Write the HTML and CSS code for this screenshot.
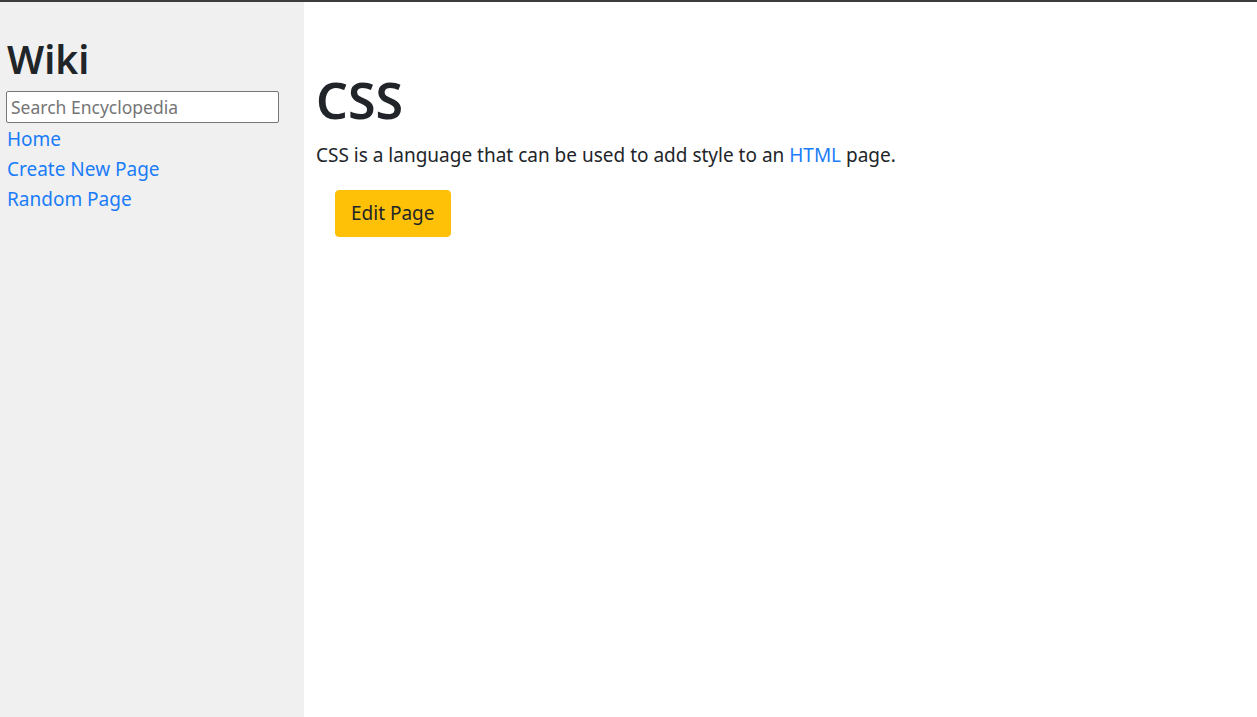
FILE: index.html
```html
<!DOCTYPE html>
<html lang="en">
<head>
<meta charset="utf-8">
<title>CSS</title>
<link rel="stylesheet" href="styles.css">
</head>
<body>
<div class="layout">
  <aside class="sidebar">
    <h2 class="brand">Wiki</h2>
    <form class="search-form">
      <input class="search" type="text" name="q" placeholder="Search Encyclopedia">
    </form>
    <div class="nav-item"><a href="#">Home</a></div>
    <div class="nav-item"><a href="#">Create New Page</a></div>
    <div class="nav-item"><a href="#">Random Page</a></div>
  </aside>
  <main class="main">
    <h1 class="title">CSS</h1>
    <p class="text">CSS is a language that can be used to add style to an <a href="#">HTML</a> page.</p>
    <div class="actions">
      <button class="btn-edit" type="button">Edit Page</button>
    </div>
  </main>
</div>
</body>
</html>
```

FILE: styles.css
```css
* { box-sizing: border-box; }
html, body { margin: 0; padding: 0; }
body {
  font-family: "Noto Sans", "Open Sans", sans-serif;
  font-size: 19px;
  line-height: 30px;
  color: #212529;
  background: #fff;
  border-top: 2px solid #3c3c3c;
}
a { color: #1a7cf8; text-decoration: none; }
.layout {
  display: flex;
  min-height: calc(100vh - 2px);
}
.sidebar {
  width: 304px;
  flex: none;
  background: #f0f0f0;
  padding: 30px 6px 0 6px;
}
.brand {
  margin: 0 0 5px 1px;
  font-size: 39px;
  line-height: 54px;
  font-weight: 600;
}
.search-form { margin: 0; }
.search {
  display: block;
  width: 273px;
  height: 32px;
  border: 1px solid #767676;
  border-radius: 2px;
  padding: 0 4px;
  font-family: inherit;
  font-size: 17.5px;
  color: #212529;
  background: #fff;
}
.search::placeholder { color: #757575; }
.nav-item { padding-left: 1px; line-height: 30px; }
.nav-item:first-of-type { margin-top: 1px; }
.main {
  flex: 1;
  padding: 68px 12px 0 12px;
}
.title {
  margin: 0 0 10px 0;
  font-size: 50px;
  line-height: 60px;
  font-weight: 600;
}
.text { margin: 0 0 20px 0; }
.actions { padding-left: 19px; }
.btn-edit {
  font-family: inherit;
  font-size: 19px;
  line-height: 27px;
  color: #212529;
  background: #ffc107;
  border: 1px solid #ffc107;
  border-radius: 4px;
  padding: 9px 15px;
  cursor: pointer;
}
```
